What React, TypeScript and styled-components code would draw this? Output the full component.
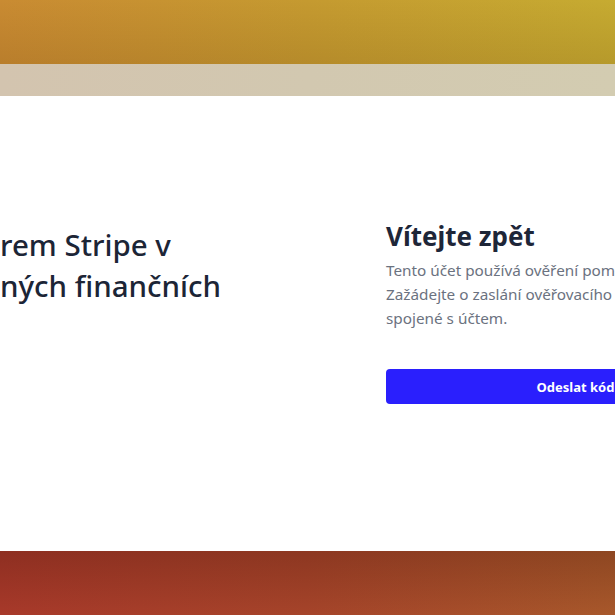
import styled, { createGlobalStyle } from 'styled-components';

const GlobalStyle = createGlobalStyle`
  html, body {
    margin: 0;
    padding: 0;
    overflow: hidden;
    background: #ffffff;
  }
  body {
    font-family: 'Noto Sans', 'Open Sans', sans-serif;
  }
`;

export default function App() {
  return (
    <>
      <GlobalStyle />
      <Page>
        <TopBand />
        <Strip />
        <Card>
          {/* Intro column, runs off the left edge */}
          <IntroColumn>
            <IntroTitle>
              rem Stripe v
              <br />
              ných finančních
            </IntroTitle>
          </IntroColumn>

          {/* Login column */}
          <LoginColumn>
            <LoginTitle>Vítejte zpět</LoginTitle>
            <LoginText>
              Tento účet používá ověření pomocí kódu.
              <br />
              Zažádejte o zaslání ověřovacího
              <br />
              spojené s účtem.
            </LoginText>
            <SendButton type='button'>Odeslat kód</SendButton>
          </LoginColumn>
        </Card>
        <BottomBand />
      </Page>
    </>
  );
}

const Page = styled.div`
  display: flex;
  flex-direction: column;
  width: 615px;
  height: 615px;
  overflow: hidden;
`;

// ------------------------------- Backdrop ------------------------------- //
const TopBand = styled.div`
  height: 64px;
  flex-shrink: 0;
  background:
    linear-gradient(180deg, rgba(0, 0, 0, 0) 0%, rgba(70, 30, 0, 0.12) 100%),
    linear-gradient(90deg, #c98b32 0%, #c59a30 50%, #c6ab31 100%);
`;

const Strip = styled.div`
  height: 32px;
  flex-shrink: 0;
  background: linear-gradient(90deg, #d3c4af 0%, #d2c8b0 50%, #d3ccb1 100%);
`;

const BottomBand = styled.div`
  height: 64px;
  flex-shrink: 0;
  background:
    linear-gradient(180deg, rgba(50, 10, 0, 0.22) 0%, rgba(0, 0, 0, 0) 100%),
    linear-gradient(90deg, #a8392a 0%, #a6442a 50%, #a8582b 100%);
`;

// ------------------------------- Card ------------------------------- //
const Card = styled.main`
  height: 455px;
  flex-shrink: 0;
  background: #ffffff;
  display: flex;
  flex-direction: row;
  overflow: hidden;
`;

const IntroColumn = styled.section`
  width: 386px;
  flex-shrink: 0;
  padding-top: 128px;
  box-sizing: border-box;
`;

const IntroTitle = styled.h2`
  margin: 0;
  color: #1c2536;
  font-size: 29.5px;
  font-weight: 500;
  line-height: 41px;
  white-space: nowrap;
`;

const LoginColumn = styled.section`
  width: 380px;
  flex-shrink: 0;
  padding-top: 124px;
  display: flex;
  flex-direction: column;
`;

const LoginTitle = styled.h1`
  margin: 0;
  color: #1e2638;
  font-size: 26px;
  font-weight: 700;
  line-height: 32px;
  white-space: nowrap;
`;

const LoginText = styled.p`
  margin: 6px 0 0;
  color: #6b7280;
  font-size: 15.3px;
  line-height: 24px;
  white-space: nowrap;
`;

const SendButton = styled.button`
  margin-top: 39px;
  height: 35px;
  width: 379px;
  border: none;
  border-radius: 4px;
  background: #2a1ffd;
  color: #ffffff;
  font-family: inherit;
  font-size: 13px;
  font-weight: 700;
  cursor: pointer;
`;
